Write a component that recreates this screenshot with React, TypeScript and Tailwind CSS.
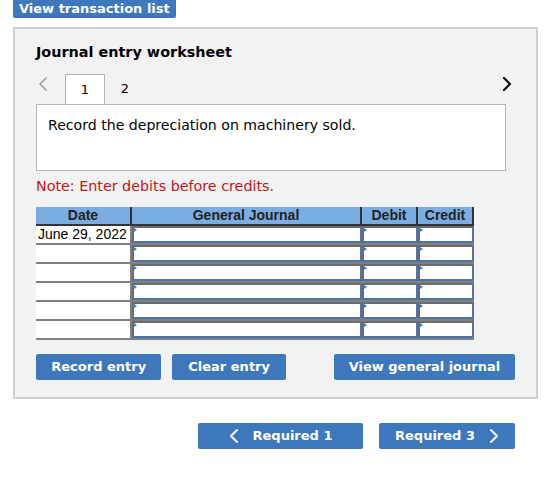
import React from "react";

const verd = { fontFamily: '"DejaVu Sans", Verdana, sans-serif' };
const ari = { fontFamily: '"Liberation Sans", Arial, sans-serif' };

function Cell() {
  return (
    <div className="relative h-full w-full border-2 border-[#4a76b0] border-t-[#6b6b6b] border-l-[#6b6b6b] bg-white">
      <span className="absolute left-0 top-0 h-0 w-0 border-y-[2px] border-l-[3px] border-y-transparent border-l-[#3a7bd5]" />
    </div>
  );
}

function ChevL({ c, w = 2 }: { c: string; w?: number }) {
  return (
    <svg width="10" height="16" viewBox="0 0 10 16" fill="none">
      <path d="M8 2 L2 8 L8 14" stroke={c} strokeWidth={w} strokeLinecap="round" strokeLinejoin="round" />
    </svg>
  );
}
function ChevR({ c, w = 2 }: { c: string; w?: number }) {
  return (
    <svg width="10" height="16" viewBox="0 0 10 16" fill="none">
      <path d="M2 2 L8 8 L2 14" stroke={c} strokeWidth={w} strokeLinecap="round" strokeLinejoin="round" />
    </svg>
  );
}

export default function App() {
  const rows = ["June 29, 2022", "", "", "", "", ""];
  return (
    <div className="h-[501px] w-[560px] bg-white" style={verd}>
      <div className="flex pl-[13px]">
        <div className="flex h-[18px] items-center rounded-b-[2px] bg-[#3d78bd] px-[6px] pb-[1px] text-[13px] font-bold leading-none text-white">
          View transaction list
        </div>
      </div>
      <div className="ml-[13px] mt-[9px] h-[372px] w-[525px] border-2 border-[#cfcfcf] bg-[#f2f2f2] px-[21px] pt-[14px]">
        <div className="text-[14.4px] font-bold leading-[18px] text-black">Journal entry worksheet</div>
        <div className="mt-[13px] flex h-[30px] items-end">
          <div className="mb-[12px] w-[29px] pl-[2px]">
            <ChevL c="#9a9a9a" w={1.6} />
          </div>
          <div className="flex h-[30px] w-[40px] items-center justify-center border border-b-0 border-[#b5b5b5] bg-white text-[13px]">1</div>
          <div className="flex h-[30px] w-[40px] items-center justify-center text-[13px]">2</div>
          <div className="flex-1" />
          <div className="mb-[12px] mr-[3px]">
            <ChevR c="#111" w={2.2} />
          </div>
        </div>
        <div className="h-[67px] w-[470px] border border-[#b5b5b5] bg-white px-[11px] pt-[11px] text-[14.1px] leading-[18px] text-black">
          Record the depreciation on machinery sold.
        </div>
        <div className="mt-[6px] text-[14.3px] leading-[18px] text-[#c4161c]">Note: Enter debits before credits.</div>
        <div className="mt-[12px] w-[438px]" style={ari}>
          <div className="grid h-[19px] grid-cols-[96px_230px_56px_56px] border-b-2 border-[#333] bg-[#7aaee2] text-[14px] font-bold leading-[17px] text-[#222]">
            <div className="border-r-2 border-[#333] text-center">Date</div>
            <div className="border-r-2 border-[#333] text-center">General Journal</div>
            <div className="border-r-2 border-[#333] text-center">Debit</div>
            <div className="border-r-2 border-[#333] text-center">Credit</div>
          </div>
          {rows.map((r, i) => (
            <div key={i} className="grid h-[19px] grid-cols-[96px_230px_56px_56px] border-b-2 border-[#808080] bg-[#f2f2f2]">
              <div className="h-full border-r-2 border-[#808080] bg-white pl-[2px] text-[14px] leading-[17px] text-black">{r}</div>
              <Cell />
              <Cell />
              <Cell />
            </div>
          ))}
        </div>
        <div className="mt-[14px] flex h-[26px] items-stretch text-[13px] font-bold text-white">
          <div className="flex w-[126px] items-center justify-center rounded-[2px] bg-[#3d78bd]">Record entry</div>
          <div className="ml-[11px] flex w-[114px] items-center justify-center rounded-[2px] bg-[#3d78bd]">Clear entry</div>
          <div className="ml-[48px] flex w-[182px] items-center justify-center rounded-[2px] bg-[#3d78bd]">View general journal</div>
        </div>
      </div>
      <div className="mt-[24px] flex h-[26px] pl-[198px] text-[13px] font-bold text-white">
        <div className="flex w-[165px] items-center justify-center gap-[14px] rounded-[2px] bg-[#3d78bd]">
          <ChevL c="#fff" w={2} />
          <span>Required 1</span>
        </div>
        <div className="ml-[16px] flex w-[136px] items-center justify-center gap-[14px] rounded-[2px] bg-[#3d78bd]">
          <span>Required 3</span>
          <ChevR c="#fff" w={2} />
        </div>
      </div>
    </div>
  );
}
